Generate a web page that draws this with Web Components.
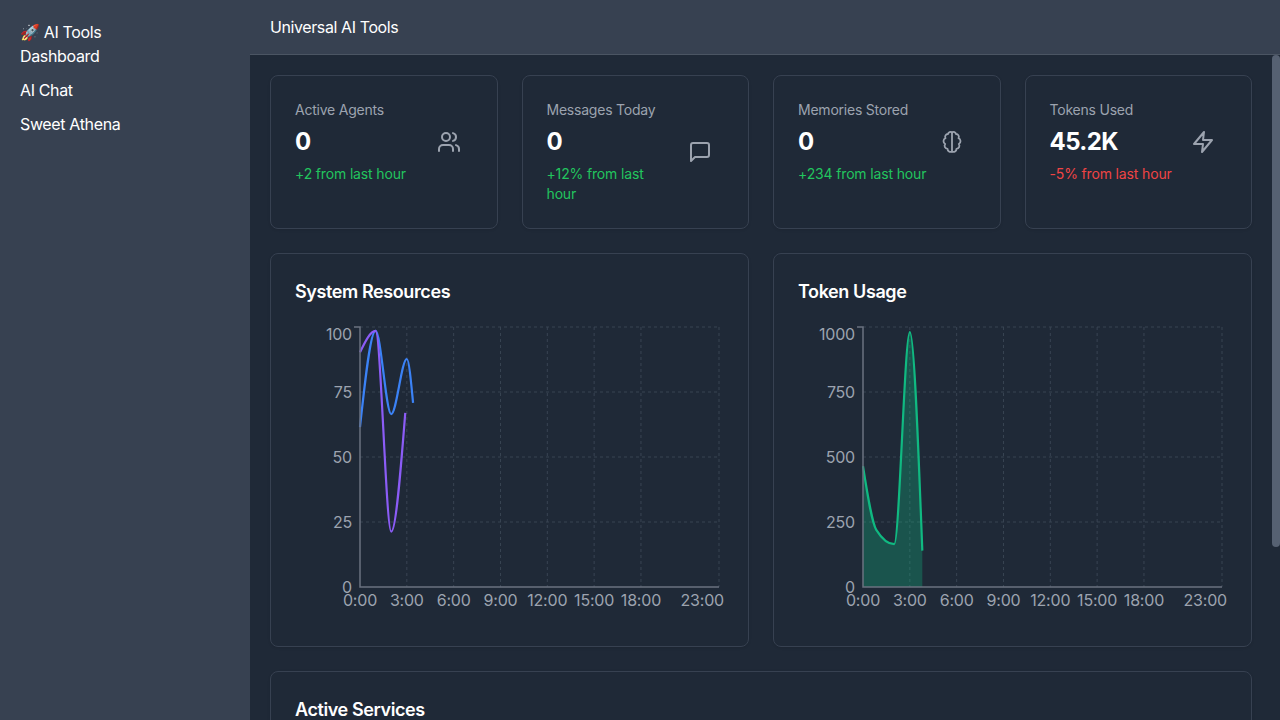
<!DOCTYPE html>
<html>
<head>
<meta charset="utf-8">
<title>Universal AI Tools</title>
<style>
html, body { margin: 0; height: 100%; overflow: hidden; }
body { font-family: Inter, "Noto Sans", sans-serif; background: #1f2937; color: #fff; }
</style>
</head>
<body>
<app-shell>
    <nav-sidebar slot="side" heading="🚀 AI Tools">
        <nav-link>Dashboard</nav-link>
        <nav-link>AI Chat</nav-link>
        <nav-link>Sweet Athena</nav-link>
    </nav-sidebar>
    <top-bar slot="top">Universal AI Tools</top-bar>

    <stat-grid>
        <stat-card label="Active Agents" value="0" change="+2 from last hour">
            <svg slot="icon" width="24" height="24" viewBox="0 0 24 24" fill="none" stroke="currentColor" stroke-width="2" stroke-linecap="round" stroke-linejoin="round"><path d="M16 21v-2a4 4 0 0 0-4-4H6a4 4 0 0 0-4 4v2"/><circle cx="9" cy="7" r="4"/><path d="M22 21v-2a4 4 0 0 0-3-3.87"/><path d="M16 3.13a4 4 0 0 1 0 7.75"/></svg>
        </stat-card>
        <stat-card label="Messages Today" value="0" change="+12% from last hour">
            <svg slot="icon" width="24" height="24" viewBox="0 0 24 24" fill="none" stroke="currentColor" stroke-width="2" stroke-linecap="round" stroke-linejoin="round"><path d="M21 15a2 2 0 0 1-2 2H7l-4 4V5a2 2 0 0 1 2-2h14a2 2 0 0 1 2 2z"/></svg>
        </stat-card>
        <stat-card label="Memories Stored" value="0" change="+234 from last hour">
            <svg slot="icon" width="24" height="24" viewBox="0 0 24 24" fill="none" stroke="currentColor" stroke-width="1.8" stroke-linecap="round" stroke-linejoin="round"><path d="M12 2.5A2.5 2.5 0 0 0 8 4 2.8 2.8 0 0 0 5.5 8.2 3.2 3.2 0 0 0 5.2 14 3 3 0 0 0 7.5 18.8 3 3 0 0 0 12 21.5"/><path d="M12 2.5A2.5 2.5 0 0 1 16 4 2.8 2.8 0 0 1 18.5 8.2 3.2 3.2 0 0 1 18.8 14 3 3 0 0 1 16.5 18.8 3 3 0 0 1 12 21.5"/><path d="M12 2.5v19"/></svg>
        </stat-card>
        <stat-card label="Tokens Used" value="45.2K" change="-5% from last hour" negative>
            <svg slot="icon" width="24" height="24" viewBox="0 0 24 24" fill="none" stroke="currentColor" stroke-width="2" stroke-linecap="round" stroke-linejoin="round"><path d="M13 2 3 14h9l-1 8 10-12h-9l1-8z"/></svg>
        </stat-card>
    </stat-grid>

    <chart-grid>
        <chart-card heading="System Resources">
            <line-chart max="100" ticks="0,25,50,75,100" series='[
                {"color":"#3b82f6","points":[[0,61.5],[1,98.5],[2,66.5],[3,87.7],[3.4,70.8]]},
                {"color":"#8b5cf6","points":[[0,90.3],[1,98.5],[2,21.3],[2.9,67]]}
            ]'></line-chart>
        </chart-card>
        <chart-card heading="Token Usage">
            <line-chart max="1000" ticks="0,250,500,750,1000" series='[
                {"color":"#10b981","area":true,"points":[[0,465],[0.85,220],[2,165],[3,980],[3.8,140]]}
            ]'></line-chart>
        </chart-card>
    </chart-grid>

    <chart-card heading="Active Services" tall></chart-card>
</app-shell>

<script>
class AppShell extends HTMLElement {
    constructor() {
        super();
        this.shadow = this.attachShadow({mode:'open'});
        this.shadow.innerHTML = `<style>
            :host { display: flex; height: 100vh; }
            .right { flex: 1; min-width: 0; display: flex; flex-direction: column; }
            .scroller { flex: 1; min-height: 0; position: relative; }
            main { height: 100%; overflow: hidden; padding: 20px 28px 20px 20px; display: flex; flex-direction: column; gap: 24px; box-sizing: border-box; }
            .thumb { position: absolute; top: 0; right: 0; width: 8px; height: 492px; background: #566172; border-radius: 4px; }
        </style>
        <slot name="side"></slot>
        <div class="right">
            <slot name="top"></slot>
            <div class="scroller"><main><slot></slot></main><div class="thumb"></div></div>
        </div>`;
    }
}

class NavSidebar extends HTMLElement {
    constructor() {
        super();
        this.shadow = this.attachShadow({mode:'open'});
        this.shadow.innerHTML = `<style>
            :host { display: block; width: 250px; flex: none; box-sizing: border-box; background: #374151; padding: 20px; }
            .brand { font-size: 16px; line-height: 24px; letter-spacing: -.35px; }
        </style><div class="brand"></div><slot></slot>`;
    }

    connectedCallback() {
        this.shadow.querySelector(".brand").textContent = this.getAttribute("heading");
    }
}

class NavLink extends HTMLElement {
    constructor() {
        super();
        this.shadow = this.attachShadow({mode:'open'});
        this.shadow.innerHTML = `<style>
            :host { display: block; font-size: 16px; line-height: 24px; letter-spacing: -.35px; margin-bottom: 10px; color: #fff; }
        </style><slot></slot>`;
    }
}

class TopBar extends HTMLElement {
    constructor() {
        super();
        this.shadow = this.attachShadow({mode:'open'});
        this.shadow.innerHTML = `<style>
            :host { display: flex; align-items: center; flex: none; height: 55px; box-sizing: border-box; padding: 0 20px; background: #374151; border-bottom: 1px solid #4b5563; font-size: 16px; letter-spacing: -.4px; }
        </style><slot></slot>`;
    }
}

class StatGrid extends HTMLElement {
    constructor() {
        super();
        this.shadow = this.attachShadow({mode:'open'});
        this.shadow.innerHTML = `<style>
            :host { display: grid; grid-template-columns: repeat(4, 1fr); gap: 24px; }
        </style><slot></slot>`;
    }
}

class ChartGrid extends HTMLElement {
    constructor() {
        super();
        this.shadow = this.attachShadow({mode:'open'});
        this.shadow.innerHTML = `<style>
            :host { display: grid; grid-template-columns: repeat(2, 1fr); gap: 24px; }
        </style><slot></slot>`;
    }
}

class StatCard extends HTMLElement {
    constructor() {
        super();
        this.shadow = this.attachShadow({mode:'open'});
        this.shadow.innerHTML = `<style>
            :host { display: block; min-width: 0; box-sizing: border-box; padding: 24px; background: #1f2937; border: 1px solid #374151; border-radius: 8px; box-shadow: 0 1px 3px rgba(0,0,0,.1); }
            .row { display: flex; align-items: center; justify-content: space-between; }
            .label { font-size: 14px; line-height: 20px; letter-spacing: -.22px; color: #9ca3af; }
            .value { font-size: 24px; line-height: 32px; font-weight: 700; letter-spacing: -.6px; margin: 6px 0 6px; color: #fff; }
            .change { font-size: 14px; line-height: 20px; letter-spacing: -.15px; color: #22c55e; }
            :host([negative]) .change { color: #ef4444; }
            .icon { flex: none; width: 48px; height: 48px; display: flex; align-items: center; justify-content: center; color: #9ca3af; }
        </style>
        <div class="row">
            <div><div class="label"></div><div class="value"></div><div class="change"></div></div>
            <div class="icon"><slot name="icon"></slot></div>
        </div>`;
    }

    connectedCallback() {
        for(let name of ["label", "value", "change"])
            this.shadow.querySelector("." + name).textContent = this.getAttribute(name);
    }
}

class ChartCard extends HTMLElement {
    constructor() {
        super();
        this.shadow = this.attachShadow({mode:'open'});
        this.shadow.innerHTML = `<style>
            :host { display: block; min-width: 0; box-sizing: border-box; padding: 24px; background: #1f2937; border: 1px solid #374151; border-radius: 8px; box-shadow: 0 1px 3px rgba(0,0,0,.1); }
            :host([tall]) { flex: none; height: 263px; }
            h3 { margin: 0 0 16px; height: 28px; font-size: 18px; line-height: 28px; font-weight: 600; letter-spacing: -.4px; color: #fff; }
        </style><h3></h3><slot></slot>`;
    }

    connectedCallback() {
        this.shadow.querySelector("h3").textContent = this.getAttribute("heading");
    }
}

class LineChart extends HTMLElement {
    constructor() {
        super();
        this.shadow = this.attachShadow({mode:'open'});
    }

    // same tangents as a monotone-x curve
    curve(pts) {
        let n = pts.length, slopes = [], tangents = [];
        for(let i = 0; i < n - 1; i++)
            slopes.push((pts[i+1][1] - pts[i][1]) / (pts[i+1][0] - pts[i][0]));
        for(let i = 1; i < n - 1; i++) {
            let a = slopes[i-1], b = slopes[i];
            let h0 = pts[i][0] - pts[i-1][0], h1 = pts[i+1][0] - pts[i][0];
            let p = (a * h1 + b * h0) / (h0 + h1);
            tangents[i] = (Math.sign(a) + Math.sign(b)) * Math.min(Math.abs(a), Math.abs(b), 0.5 * Math.abs(p)) || 0;
        }
        tangents[0] = (3 * slopes[0] - tangents[1]) / 2;
        tangents[n-1] = (3 * slopes[n-2] - tangents[n-2]) / 2;
        let d = "M" + pts[0][0] + "," + pts[0][1];
        for(let i = 0; i < n - 1; i++) {
            let dx = (pts[i+1][0] - pts[i][0]) / 3;
            d += "C" + (pts[i][0] + dx) + "," + (pts[i][1] + tangents[i] * dx) + "," + (pts[i+1][0] - dx) + "," + (pts[i+1][1] - tangents[i+1] * dx) + "," + pts[i+1][0] + "," + pts[i+1][1];
        }
        return d;
    }

    connectedCallback() {
        let left = 65, right = 424, top = 5, bottom = 265;
        let max = Number(this.getAttribute("max"));
        let yTicks = this.getAttribute("ticks").split(",").map(Number);
        let series = JSON.parse(this.getAttribute("series"));
        let hours = [0, 3, 6, 9, 12, 15, 18, 23];
        let px = h => left + h * (right - left) / 23;
        let py = v => bottom - v * (bottom - top) / max;

        let out = "";
        for(let v of yTicks)
            if(v > 0) out += `<line class="grid" x1="${left}" x2="${right}" y1="${py(v)}" y2="${py(v)}"/>`;
        for(let h of hours)
            if(h > 0) out += `<line class="grid" x1="${px(h)}" x2="${px(h)}" y1="${top}" y2="${bottom}"/>`;

        for(let s of series) {
            let pts = s.points.map(p => [px(p[0]), py(p[1])]);
            let d = this.curve(pts);
            if(s.area)
                out += `<path d="${d}L${pts[pts.length-1][0]},${bottom}L${pts[0][0]},${bottom}Z" fill="${s.color}" fill-opacity=".3"/>`;
            out += `<path d="${d}" fill="none" stroke="${s.color}" stroke-width="2.2"/>`;
        }

        out += `<path class="axis" d="M${left-6},${top}H${left}V${bottom}H${right}"/>`;
        for(let v of yTicks) {
            // first label sits under the top of the axis
            let y = v == max ? py(v) + 7 : py(v);
            out += `<text x="${left-8}" y="${y}" text-anchor="end" dominant-baseline="central">${v}</text>`;
        }
        for(let h of hours) {
            let x = h == 23 ? px(h) + 5 : px(h);
            let anchor = h == 23 ? "end" : "middle";
            out += `<text x="${x}" y="278" text-anchor="${anchor}" dominant-baseline="central">${h}:00</text>`;
        }

        this.shadow.innerHTML = `<style>
            :host { display: block; height: 300px; }
            svg { display: block; width: 100%; height: 100%; }
            .grid { stroke: #394453; stroke-dasharray: 3 3; }
            .axis { fill: none; stroke: #6b7280; stroke-width: 1.5; }
            text { font-size: 16px; letter-spacing: -.2px; fill: #9ca3af; }
        </style><svg viewBox="0 0 429 300">${out}</svg>`;
    }
}

customElements.define("app-shell", AppShell);
customElements.define("nav-sidebar", NavSidebar);
customElements.define("nav-link", NavLink);
customElements.define("top-bar", TopBar);
customElements.define("stat-grid", StatGrid);
customElements.define("chart-grid", ChartGrid);
customElements.define("stat-card", StatCard);
customElements.define("chart-card", ChartCard);
customElements.define("line-chart", LineChart);
</script>
</body>
</html>
